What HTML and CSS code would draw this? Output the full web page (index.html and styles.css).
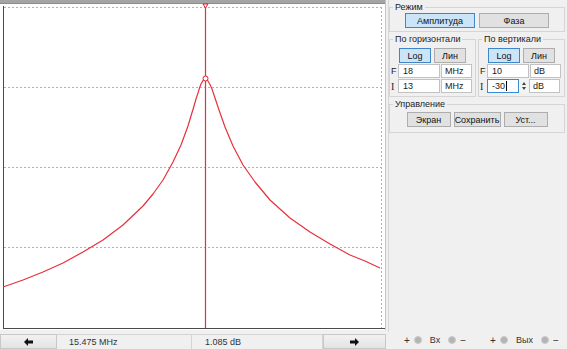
FILE: index.html
```html
<!DOCTYPE html>
<html lang="ru">
<head>
  <meta charset="UTF-8">
  <title>Анализатор</title>
  <link rel="stylesheet" href="styles.css">
</head>
<body>
  <div class="app">
    <div class="scope">
      <svg class="plot" width="389" height="332" viewBox="0 0 389 332">
        <rect x="0" y="0" width="389" height="332" fill="#f0f0f0"/>
        <rect x="0" y="0" width="385" height="330" fill="#ffffff"/>
        <rect x="0" y="0" width="385" height="4" fill="#a4a4a4"/>
        <line x1="0" y1="3.5" x2="385" y2="3.5" stroke="#8c8c8c"/>
        <line x1="385.5" y1="0" x2="385.5" y2="330" stroke="#c4c4c4"/>
        <line x1="388.5" y1="0" x2="388.5" y2="332" stroke="#d6d6d6"/>

        <g class="grid">
          <line x1="4" y1="7.5" x2="382" y2="7.5"/>
          <line x1="4" y1="87.5" x2="382" y2="87.5"/>
          <line x1="4" y1="167.5" x2="382" y2="167.5"/>
          <line x1="4" y1="247.5" x2="382" y2="247.5"/>
          <line x1="381.5" y1="7" x2="381.5" y2="328"/>
        </g>

        <line x1="3.5" y1="6" x2="3.5" y2="329" stroke="#4a4a4a"/>
        <line x1="3" y1="328.5" x2="385" y2="328.5" stroke="#4a4a4a"/>

        <line class="probe" x1="205.5" y1="4" x2="205.5" y2="328"/>
        <path class="curve" d="M3 287 L23 280 L43 272 L63 263 L83 252 L103 240 L123 225 L143 206 L153 194 L163 180 L173 162 L181 145 L188 126 L194 106 L196 99 L198 93 L199.5 88 L201 84 L203 80.6 L205.5 79 L207.5 80.2 L210 84.5 L212 89 L214 95 L219 110 L225 127 L233 146 L243 165 L255 182 L270 200 L290 218 L310 232 L330 244 L350 255 L365 261 L380 268"/>
        <circle class="marker" cx="205.5" cy="78.5" r="2.5"/>
        <path class="marker" d="M203 4 L208 4 L205.5 8 Z"/>
      </svg>

      <div class="statusbar">
        <button class="nav nav-left">
          <svg width="9" height="8" viewBox="0 0 9 8"><path d="M0 4 L4 0 L4 2.5 L9 2.5 L9 5.5 L4 5.5 L4 8 Z"/></svg>
        </button>
        <div class="cell freq">15.475 MHz</div>
        <div class="cell level">1.085 dB</div>
        <button class="nav nav-right">
          <svg width="9" height="8" viewBox="0 0 9 8"><path d="M9 4 L5 0 L5 2.5 L0 2.5 L0 5.5 L5 5.5 L5 8 Z"/></svg>
        </button>
      </div>
    </div>

    <div class="panel">
      <fieldset class="group mode">
        <legend>Режим</legend>
        <div class="btn-row">
          <button class="btn wide active">Амплитуда</button>
          <button class="btn wide">Фаза</button>
        </div>
      </fieldset>

      <div class="axes">
        <fieldset class="group axis">
          <legend>По горизонтали</legend>
          <div class="btn-row small">
            <button class="btn toggle active">Log</button>
            <button class="btn toggle">Лин</button>
          </div>
          <div class="field-row">
            <span class="lbl">F</span>
            <span class="field">18</span>
            <span class="field unit">MHz</span>
          </div>
          <div class="field-row">
            <span class="lbl serif">I</span>
            <span class="field">13</span>
            <span class="field unit">MHz</span>
          </div>
        </fieldset>

        <fieldset class="group axis">
          <legend>По вертикали</legend>
          <div class="btn-row small">
            <button class="btn toggle active">Log</button>
            <button class="btn toggle">Лин</button>
          </div>
          <div class="field-row">
            <span class="lbl">F</span>
            <span class="field">10</span>
            <span class="field unit">dB</span>
          </div>
          <div class="field-row">
            <span class="lbl serif">I</span>
            <span class="field short focus">-30<span class="caret"></span></span>
            <span class="spin"><span class="up"></span><span class="down"></span></span>
            <span class="field unit">dB</span>
          </div>
        </fieldset>
      </div>

      <fieldset class="group control">
        <legend>Управление</legend>
        <div class="btn-row">
          <button class="btn act">Экран</button>
          <button class="btn act">Сохранить</button>
          <button class="btn act">Уст...</button>
        </div>
      </fieldset>

      <div class="spacer"></div>

      <div class="gains">
        <div class="gain">
          <span class="sign">+</span><span class="knob"></span>
          <span class="gain-name">Вх</span>
          <span class="knob"></span><span class="sign">−</span>
        </div>
        <div class="gain">
          <span class="sign">+</span><span class="knob"></span>
          <span class="gain-name">Вых</span>
          <span class="knob"></span><span class="sign">−</span>
        </div>
        <span class="grip"></span>
      </div>
    </div>
  </div>
</body>
</html>
```

FILE: styles.css
```css
* {
  box-sizing: border-box;
}

body {
  margin: 0;
  background: #f0f0f0;
  font-family: "Liberation Sans", Arial, sans-serif;
  font-size: 9px;
  color: #1a1a1a;
}

.app {
  display: flex;
  width: 567px;
  height: 349px;
  overflow: hidden;
}

/* plot side */

.scope {
  width: 389px;
  display: flex;
  flex-direction: column;
}

.plot {
  display: block;
}

.grid line {
  stroke: #b0b0b0;
  stroke-width: 1;
  stroke-dasharray: 2 2;
}

.probe {
  stroke: #e8303c;
  stroke-width: 1.2;
}

.curve {
  fill: none;
  stroke: #e8303c;
  stroke-width: 1.2;
  stroke-linejoin: round;
}

.marker {
  fill: #fff;
  stroke: #d8202c;
  stroke-width: 1;
}

.statusbar {
  display: flex;
  height: 17px;
  padding-top: 2px;
  width: 386px;
}

.nav {
  height: 15px;
  margin: 0;
  padding: 0;
  border: 1px solid #c8c8c8;
  background: linear-gradient(#f2f2f2, #e3e3e3);
  display: flex;
  align-items: center;
  justify-content: center;
}

.nav svg path {
  fill: #111;
}

.nav-left {
  width: 57px;
}

.nav-right {
  width: 63px;
}

.cell {
  height: 15px;
  line-height: 14px;
  border-top: 1px solid #d4d4d4;
  border-right: 1px solid #d4d4d4;
  padding-left: 12px;
  color: #333;
}

.freq {
  width: 135px;
}

.level {
  width: 131px;
  padding-left: 13px;
}

/* control panel */

.panel {
  width: 178px;
  display: flex;
  flex-direction: column;
  padding: 1px 2px 0 0;
}

.group {
  margin: 0;
  padding: 0 0 3px 0;
  border: 1px solid #d5d5d5;
  min-width: 0;
}

.group legend {
  margin-left: 3px;
  padding: 0 2px;
  line-height: 12px;
  color: #222;
}

.btn-row {
  display: flex;
  justify-content: center;
  gap: 4px;
}

.btn {
  height: 15px;
  margin: 0;
  padding: 0;
  font-family: inherit;
  font-size: 9px;
  color: #111;
  background: #e1e1e1;
  border: 1px solid #adadad;
}

.btn.active {
  background: #cce4f7;
  border-color: #3f86c8;
}

.wide {
  width: 70px;
}

.mode {
  padding-bottom: 3px;
}

.axes {
  display: flex;
  gap: 2px;
  margin-top: 1px;
}

.axis {
  flex: 1;
  padding-bottom: 2px;
}

.btn-row.small {
  gap: 3px;
  margin-top: 3px;
  margin-bottom: 1px;
}

.toggle {
  width: 32px;
}

.field-row {
  display: flex;
  align-items: center;
  padding-left: 1px;
  margin-bottom: 1px;
  height: 14px;
}

.lbl {
  width: 7px;
  font-size: 9px;
  color: #222;
}

.serif {
  font-family: "Liberation Serif", serif;
  font-size: 10px;
}

.field {
  height: 14px;
  width: 42px;
  line-height: 12px;
  padding-left: 4px;
  background: #fff;
  border: 1px solid #c2c2c2;
  display: flex;
  align-items: center;
}

.field.unit {
  width: 31px;
  margin-left: 1px;
  padding-left: 3px;
}

.field.short {
  width: 32px;
}

.field.focus {
  border-color: #3a8ad4;
}

.caret {
  display: inline-block;
  width: 1px;
  height: 10px;
  background: #000;
  margin-left: 1px;
}

.spin {
  width: 9px;
  height: 14px;
  display: flex;
  flex-direction: column;
  align-items: center;
  justify-content: center;
  gap: 2px;
  background: #f4f4f4;
}

.spin .up {
  border-left: 2px solid transparent;
  border-right: 2px solid transparent;
  border-bottom: 3px solid #444;
}

.spin .down {
  border-left: 2px solid transparent;
  border-right: 2px solid transparent;
  border-top: 3px solid #444;
}

.control {
  margin-top: 1px;
  padding-bottom: 5px;
}

.control .btn-row {
  margin-top: 2px;
  gap: 3px;
}

.act {
  width: 44px;
}

.act:nth-child(2) {
  width: 47px;
}

.spacer {
  flex: 1;
}

.gains {
  display: flex;
  align-items: center;
  height: 16px;
  padding-left: 15px;
  margin-bottom: 1px;
  gap: 24px;
  color: #333;
}

.gain {
  display: flex;
  align-items: center;
  gap: 4px;
}

.sign {
  font-size: 10px;
}

.gain-name {
  padding: 0 4px;
}

.knob {
  width: 8px;
  height: 8px;
  border-radius: 50%;
  background: #b4b4b4;
  border: 1px solid #cbcbcb;
}

.grip {
  width: 2px;
  height: 2px;
  background: #999;
  margin-left: -10px;
  margin-top: 4px;
}
```
